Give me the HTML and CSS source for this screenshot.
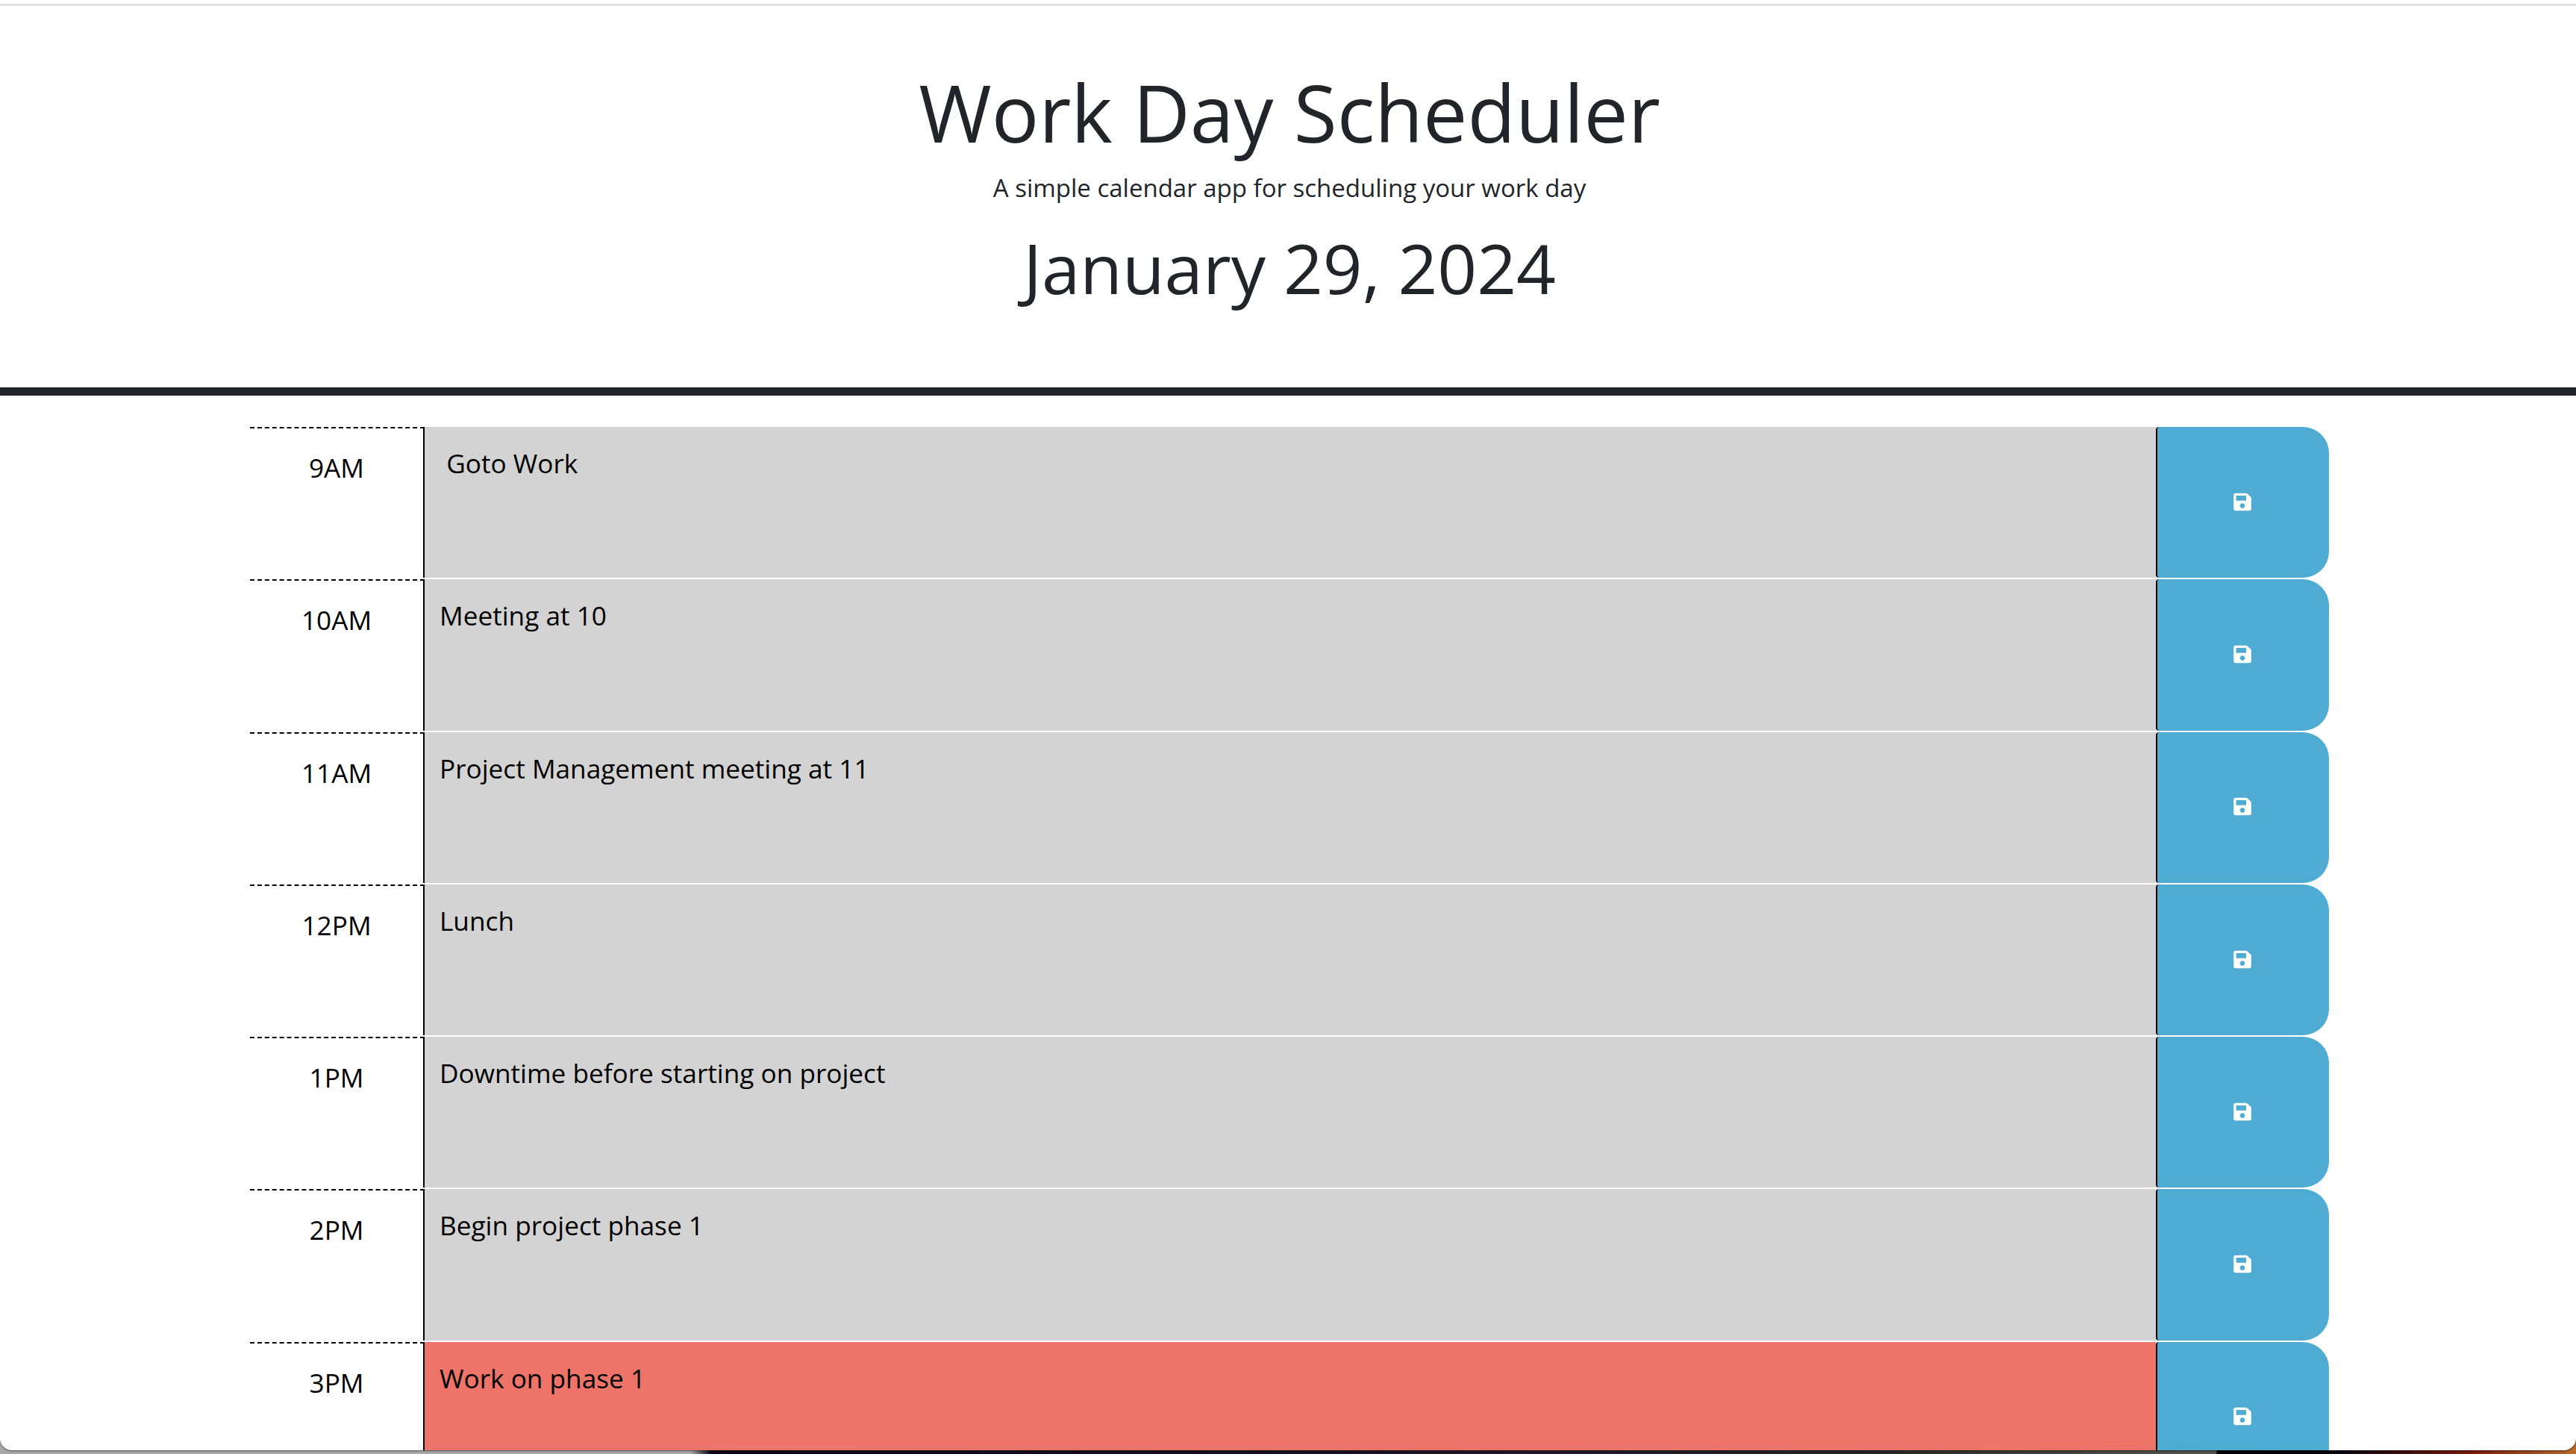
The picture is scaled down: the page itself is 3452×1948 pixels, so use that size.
FILE: index.html
```html
<!DOCTYPE html>
<html lang="en">
<head>
    <meta charset="UTF-8">
    <title>Work Day Scheduler</title>
    <link rel="stylesheet" href="styles.css">
</head>
<body>
    <div class="window">
        <header class="jumbotron">
            <h1 class="title">Work Day Scheduler</h1>
            <p class="lead">A simple calendar app for scheduling your work day</p>
            <p class="current-day">January 29, 2024</p>
        </header>
        <div class="container">
            <div class="time-block">
                <div class="hour">9AM</div>
                <textarea class="description past"> Goto Work</textarea>
                <button class="save-btn"><svg class="save-icon" viewBox="0 0 448 512"><path d="M433.941 129.941l-83.882-83.882A48 48 0 0 0 316.118 32H48C21.49 32 0 53.49 0 80v352c0 26.51 21.49 48 48 48h352c26.51 0 48-21.49 48-48V163.882a48 48 0 0 0-14.059-33.941zM224 416c-35.346 0-64-28.654-64-64 0-35.346 28.654-64 64-64s64 28.654 64 64c0 35.346-28.654 64-64 64zm96-304.52V212c0 6.627-5.373 12-12 12H76c-6.627 0-12-5.373-12-12V108c0-6.627 5.373-12 12-12h228.52c3.183 0 6.235 1.264 8.485 3.515l3.48 3.48A11.996 11.996 0 0 1 320 111.48z"/></svg></button>
            </div>
            <div class="time-block">
                <div class="hour">10AM</div>
                <textarea class="description past">Meeting at 10</textarea>
                <button class="save-btn"><svg class="save-icon" viewBox="0 0 448 512"><path d="M433.941 129.941l-83.882-83.882A48 48 0 0 0 316.118 32H48C21.49 32 0 53.49 0 80v352c0 26.51 21.49 48 48 48h352c26.51 0 48-21.49 48-48V163.882a48 48 0 0 0-14.059-33.941zM224 416c-35.346 0-64-28.654-64-64 0-35.346 28.654-64 64-64s64 28.654 64 64c0 35.346-28.654 64-64 64zm96-304.52V212c0 6.627-5.373 12-12 12H76c-6.627 0-12-5.373-12-12V108c0-6.627 5.373-12 12-12h228.52c3.183 0 6.235 1.264 8.485 3.515l3.48 3.48A11.996 11.996 0 0 1 320 111.48z"/></svg></button>
            </div>
            <div class="time-block">
                <div class="hour">11AM</div>
                <textarea class="description past">Project Management meeting at 11</textarea>
                <button class="save-btn"><svg class="save-icon" viewBox="0 0 448 512"><path d="M433.941 129.941l-83.882-83.882A48 48 0 0 0 316.118 32H48C21.49 32 0 53.49 0 80v352c0 26.51 21.49 48 48 48h352c26.51 0 48-21.49 48-48V163.882a48 48 0 0 0-14.059-33.941zM224 416c-35.346 0-64-28.654-64-64 0-35.346 28.654-64 64-64s64 28.654 64 64c0 35.346-28.654 64-64 64zm96-304.52V212c0 6.627-5.373 12-12 12H76c-6.627 0-12-5.373-12-12V108c0-6.627 5.373-12 12-12h228.52c3.183 0 6.235 1.264 8.485 3.515l3.48 3.48A11.996 11.996 0 0 1 320 111.48z"/></svg></button>
            </div>
            <div class="time-block">
                <div class="hour">12PM</div>
                <textarea class="description past">Lunch</textarea>
                <button class="save-btn"><svg class="save-icon" viewBox="0 0 448 512"><path d="M433.941 129.941l-83.882-83.882A48 48 0 0 0 316.118 32H48C21.49 32 0 53.49 0 80v352c0 26.51 21.49 48 48 48h352c26.51 0 48-21.49 48-48V163.882a48 48 0 0 0-14.059-33.941zM224 416c-35.346 0-64-28.654-64-64 0-35.346 28.654-64 64-64s64 28.654 64 64c0 35.346-28.654 64-64 64zm96-304.52V212c0 6.627-5.373 12-12 12H76c-6.627 0-12-5.373-12-12V108c0-6.627 5.373-12 12-12h228.52c3.183 0 6.235 1.264 8.485 3.515l3.48 3.48A11.996 11.996 0 0 1 320 111.48z"/></svg></button>
            </div>
            <div class="time-block">
                <div class="hour">1PM</div>
                <textarea class="description past">Downtime before starting on project</textarea>
                <button class="save-btn"><svg class="save-icon" viewBox="0 0 448 512"><path d="M433.941 129.941l-83.882-83.882A48 48 0 0 0 316.118 32H48C21.49 32 0 53.49 0 80v352c0 26.51 21.49 48 48 48h352c26.51 0 48-21.49 48-48V163.882a48 48 0 0 0-14.059-33.941zM224 416c-35.346 0-64-28.654-64-64 0-35.346 28.654-64 64-64s64 28.654 64 64c0 35.346-28.654 64-64 64zm96-304.52V212c0 6.627-5.373 12-12 12H76c-6.627 0-12-5.373-12-12V108c0-6.627 5.373-12 12-12h228.52c3.183 0 6.235 1.264 8.485 3.515l3.48 3.48A11.996 11.996 0 0 1 320 111.48z"/></svg></button>
            </div>
            <div class="time-block">
                <div class="hour">2PM</div>
                <textarea class="description past">Begin project phase 1</textarea>
                <button class="save-btn"><svg class="save-icon" viewBox="0 0 448 512"><path d="M433.941 129.941l-83.882-83.882A48 48 0 0 0 316.118 32H48C21.49 32 0 53.49 0 80v352c0 26.51 21.49 48 48 48h352c26.51 0 48-21.49 48-48V163.882a48 48 0 0 0-14.059-33.941zM224 416c-35.346 0-64-28.654-64-64 0-35.346 28.654-64 64-64s64 28.654 64 64c0 35.346-28.654 64-64 64zm96-304.52V212c0 6.627-5.373 12-12 12H76c-6.627 0-12-5.373-12-12V108c0-6.627 5.373-12 12-12h228.52c3.183 0 6.235 1.264 8.485 3.515l3.48 3.48A11.996 11.996 0 0 1 320 111.48z"/></svg></button>
            </div>
            <div class="time-block">
                <div class="hour">3PM</div>
                <textarea class="description present">Work on phase 1</textarea>
                <button class="save-btn"><svg class="save-icon" viewBox="0 0 448 512"><path d="M433.941 129.941l-83.882-83.882A48 48 0 0 0 316.118 32H48C21.49 32 0 53.49 0 80v352c0 26.51 21.49 48 48 48h352c26.51 0 48-21.49 48-48V163.882a48 48 0 0 0-14.059-33.941zM224 416c-35.346 0-64-28.654-64-64 0-35.346 28.654-64 64-64s64 28.654 64 64c0 35.346-28.654 64-64 64zm96-304.52V212c0 6.627-5.373 12-12 12H76c-6.627 0-12-5.373-12-12V108c0-6.627 5.373-12 12-12h228.52c3.183 0 6.235 1.264 8.485 3.515l3.48 3.48A11.996 11.996 0 0 1 320 111.48z"/></svg></button>
            </div>
        </div>
    </div>
</body>
</html>
```

FILE: styles.css
```css
* {
    box-sizing: border-box;
}
html, body {
    height: 100%;
}
body {
    margin: 0;
    overflow: hidden;
    background: linear-gradient(to right, #a8a8a8 0, #a8a8a8 26.8%, #0b0716 27.6%, #171020 50%, #221a2a 60%, #242424 72%, #55554f 86%, #000 86.1%, #0a0510 91%, #7a1a0a 96%, #b86a2c 100%);
    font-family: "Open Sans", sans-serif;
}
.window {
    height: 1943px;
    padding-top: 5px;
    overflow: hidden;
    background: white;
    border-radius: 0 0 16px 16px;
    box-shadow: 0 1px 2px rgba(0, 0, 0, 0.5);
}
.jumbotron {
    height: 525px;
    padding: 79px 0 0 4px;
    text-align: center;
    color: #212529;
    border-top: 3px solid #e2e2e2;
    border-bottom: 11px solid #212529;
}
.title {
    margin: 0;
    font-size: 105.6px;
    font-weight: 400;
    line-height: 1.2;
}
.lead {
    margin: 13px 0 0;
    font-size: 33px;
    line-height: 1.5;
}
.current-day {
    margin: 13px 0 0;
    font-size: 92.4px;
    line-height: 1.5;
}
.container {
    width: 2786px;
    margin: 42px 0 0 335px;
}
.time-block {
    display: flex;
    height: 204.3px;
    padding-bottom: 2px;
}
.hour {
    width: 234px;
    padding-top: 26px;
    text-align: center;
    font-size: 35.2px;
    line-height: 1.5;
    color: black;
    border-top: 2px dashed black;
    border-right: 2px solid black;
}
.description {
    flex: 1;
    height: 100%;
    padding: 22px 20px 0;
    border: none;
    outline: none;
    resize: none;
    overflow: hidden;
    color: black;
    font-family: inherit;
    font-size: 35.2px;
    line-height: 1.5;
}
.past {
    background-color: #d3d3d3;
}
.present {
    background-color: #ee7368;
}
.save-btn {
    display: flex;
    align-items: center;
    justify-content: center;
    width: 232px;
    padding: 0 2px 2px 0;
    border: none;
    border-left: 2px solid black;
    border-radius: 4px 35px 35px 4px;
    background-color: #4fabd2;
}
.save-icon {
    width: 24px;
    height: 27px;
    fill: white;
}
```
